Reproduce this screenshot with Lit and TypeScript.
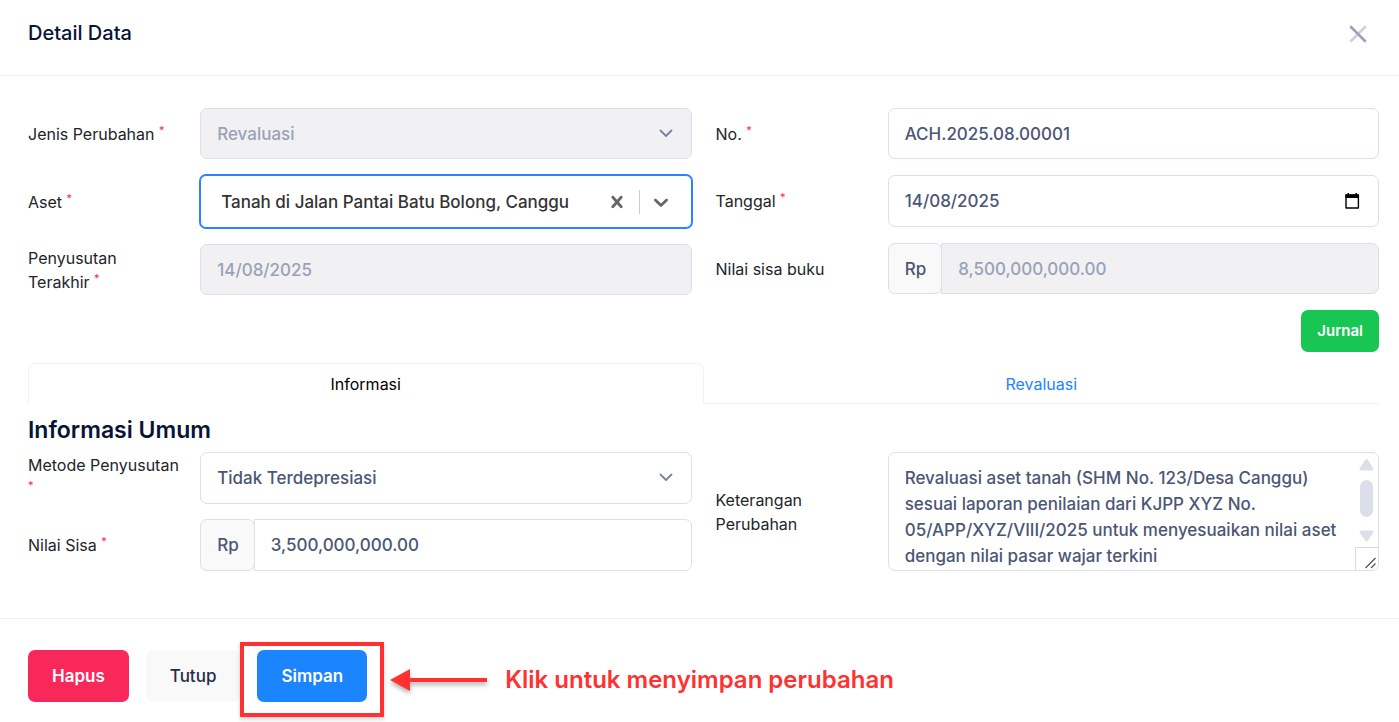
import { LitElement, html, css, nothing } from "lit";
import { customElement, state } from "lit/decorators.js";

const chevron = html`<svg class="chevron" viewBox="0 0 16 16" width="16" height="16" aria-hidden="true">
  <path d="M2.500 5.500L8 11l5.500-5.500" fill="none" stroke="#78829d" stroke-width="1.800" stroke-linecap="round" stroke-linejoin="round" />
</svg>`;

const base = css`
  *, *::before, *::after { box-sizing: border-box; }
  button, input, select, textarea { font: inherit; margin: 0; }
  button { cursor: pointer; }
`;

@customElement("app-root")
export class AppRoot extends LitElement {
  @state() private tab = "informasi";

  static styles = [base, css`
    :host {
      display: block;
      min-height: 100vh;
      background: #fff;
      color: #212529;
      font-family: Inter, "Liberation Sans", sans-serif;
      font-size: 16px;
      line-height: 24px;
      overflow: hidden;
    }
    .header {
      display: flex;
      align-items: center;
      justify-content: space-between;
      height: 76px;
      padding: 0 28px 8px;
      border-bottom: 1px solid #eff2f5;
    }
    .title { margin: 0 0 2px; font-size: 20px; line-height: 24px; font-weight: 500; color: #071437; }
    .close { display: flex; padding: 0; border: 0; background: none; width: 26px; height: 26px; align-items: center; justify-content: center; }
    .body { padding: 32px 20px 47px 28px; }
    .columns { display: grid; grid-template-columns: repeat(2, minmax(0, 1fr)); column-gap: 24px; align-items: start; }
    .stack { display: grid; row-gap: 16px; }
    .stack.dense { row-gap: 15px; }
    .row { display: grid; grid-template-columns: minmax(0, 4fr) minmax(0, 13fr); column-gap: 21px; align-items: center; }
    .row.top { align-items: start; }
    .row.top label { padding-top: 1px; }
    .required { color: #f8285a; font-size: 11px; line-height: 0; vertical-align: super; }

    .control {
      display: block;
      width: 100%;
      height: 51px;
      padding: 0 16px;
      border: 1px solid #dbdfe9;
      border-radius: 7px;
      background: #fff;
      color: #4b5675;
      font-size: 17px;
      line-height: 26px;
      font-weight: 500;
      outline: 0;
      appearance: none;
      opacity: 1;
    }
    .control:disabled { background: #f1f1f4; color: #99a1b7; }
    .tall { height: 52px; }
    .field { position: relative; }
    .chevron { position: absolute; right: 18px; top: 50%; margin-top: -9px; pointer-events: none; }
    .calendar { position: absolute; right: 17px; top: 0; bottom: 0; display: flex; align-items: center; padding: 0; border: 0; background: none; }

    .combo {
      display: flex;
      align-items: center;
      height: 53px;
      padding: 0 13px 0 20px;
      border: 1px solid #2684ff;
      border-radius: 6px;
      box-shadow: 0 0 0 1px #2684ff;
      background: #fff;
    }
    .combo-input { flex: 1; min-width: 0; padding: 0; border: 0; outline: 0; background: none; color: #333; font-size: 17px; line-height: 26px; font-weight: 500; }
    .combo-button { display: flex; padding: 5px; border: 0; background: none; color: #666; }
    .divider { width: 1px; height: 24px; margin: 0 4px 0 5px; background: #ccc; }

    .group { display: flex; }
    .prefix {
      display: flex;
      align-items: center;
      padding: 0 15px 0 16px;
      border: 1px solid #dbdfe9;
      border-radius: 7px;
      background: #f9f9f9;
      color: #4b5675;
      font-size: 17px;
      line-height: 26px;
      font-weight: 500;
    }
    .group .control { flex: 1; min-width: 0; width: auto; margin-left: -1px; border-radius: 0 7px 7px 0; }

    .actions { display: flex; justify-content: flex-end; margin: 15px 0 11px; }
    .btn { border: 0; border-radius: 7px; font-weight: 600; }
    .jurnal { height: 42px; padding: 0 16px; background: #17c653; color: #fff; font-size: 15px; }

    .tabs { display: grid; grid-template-columns: 1fr 1fr; }
    .tab { height: 41px; border: 1px solid transparent; border-bottom-color: #eff2f5; background: none; color: #1b84ff; padding: 0; }
    .tab.active { border-color: #eff2f5; border-bottom-color: #fff; border-radius: 7px 7px 0 0; color: #000; }
    .section { margin: 12px 0 8px; font-size: 23px; line-height: 28px; font-weight: 600; color: #071437; }

    .area { height: 119px; padding: 12px 36px 0 16px; overflow: hidden; resize: none; }
    .scroll { position: absolute; right: 0; top: 0; pointer-events: none; }

    .footer { display: flex; gap: 17px; padding: 31px 28px 20px; border-top: 1px solid #eff2f5; }
    .footer .btn { height: 52px; padding: 0 24px; font-size: 17px; }
    .footer .hapus { background: #f8285a; color: #fff; }
    .footer .tutup { background: #f9f9f9; color: #252f4a; font-weight: 500; }
    .footer .simpan { background: #1b84ff; color: #fff; }
    .save { position: relative; display: flex; }
    .frame {
      position: absolute;
      inset: -8px -17px -15px;
      border: 4px solid #ff3131;
      box-shadow: 0 2px 4px rgba(0, 0, 0, 0.2);
      pointer-events: none;
    }
    .hint {
      position: absolute;
      left: 100%;
      top: -8px;
      bottom: -15px;
      display: flex;
      align-items: center;
      gap: 17px;
      padding-left: 21px;
      color: #ff3131;
      font-size: 24px;
      line-height: 28px;
      font-weight: 600;
      white-space: nowrap;
      pointer-events: none;
    }
    .arrow { filter: drop-shadow(0 3px 2px rgba(0, 0, 0, 0.3)); }
  `];

  private label(id: string, text: string, required = false) {
    return html`<label for=${id}>${text}${required ? html` <span class="required">*</span>` : nothing}</label>`;
  }

  render() {
    return html`
      <header class="header">
        <h1 class="title">Detail Data</h1>
        <button class="close" aria-label="Close">
          <svg viewBox="0 0 18 18" width="18" height="18">
            <path d="M2 16L16 2" stroke="#cdd1de" stroke-width="2.600" stroke-linecap="round" />
            <path d="M2 2l14 14" stroke="#99a1b7" stroke-width="2.600" stroke-linecap="round" />
          </svg>
        </button>
      </header>

      <main class="body">
        <div class="columns">
          <div class="stack">
            <div class="row">
              ${this.label("jenis", "Jenis Perubahan", true)}
              <div class="field">
                <select id="jenis" class="control" disabled><option>Revaluasi</option></select>
                ${chevron}
              </div>
            </div>
            <div class="row">
              ${this.label("aset", "Aset", true)}
              <div class="combo">
                <input id="aset" class="combo-input" role="combobox" aria-expanded="false" .value=${"Tanah di Jalan Pantai Batu Bolong, Canggu"} />
                <button class="combo-button" aria-label="Clear">
                  <svg viewBox="0 0 20 20" width="24" height="24" fill="currentColor">
                    <path d="M14.348 14.849c-0.469 0.469-1.229 0.469-1.697 0l-2.651-3.030-2.651 3.029c-0.469 0.469-1.229 0.469-1.697 0-0.469-0.469-0.469-1.229 0-1.697l2.758-3.15-2.759-3.152c-0.469-0.469-0.469-1.228 0-1.697s1.228-0.469 1.697 0l2.652 3.031 2.651-3.031c0.469-0.469 1.228-0.469 1.697 0s0.469 1.229 0 1.697l-2.758 3.152 2.758 3.15c0.469 0.469 0.469 1.229 0 1.698z" />
                  </svg>
                </button>
                <span class="divider"></span>
                <button class="combo-button" aria-label="Open">
                  <svg viewBox="0 0 20 20" width="24" height="24" fill="currentColor">
                    <path d="M4.516 7.548c0.436-0.446 1.043-0.481 1.576 0l3.908 3.747 3.908-3.747c0.533-0.481 1.141-0.446 1.574 0 0.436 0.445 0.408 1.197 0 1.615-0.406 0.418-4.695 4.502-4.695 4.502-0.217 0.223-0.502 0.335-0.787 0.335s-0.57-0.112-0.789-0.335c0 0-4.287-4.084-4.695-4.502s-0.436-1.17 0-1.615z" />
                  </svg>
                </button>
              </div>
            </div>
            <div class="row">
              ${this.label("terakhir", "Penyusutan Terakhir", true)}
              <input id="terakhir" class="control" disabled .value=${"14/08/2025"} />
            </div>
          </div>

          <div class="stack">
            <div class="row">
              ${this.label("nomor", "No.", true)}
              <input id="nomor" class="control" .value=${"ACH.2025.08.00001"} />
            </div>
            <div class="row">
              ${this.label("tanggal", "Tanggal", true)}
              <div class="field">
                <input id="tanggal" class="control tall" .value=${"14/08/2025"} />
                <button class="calendar" aria-label="Pilih tanggal">
                  <svg viewBox="0 0 20 20" width="20" height="20">
                    <path d="M4 4h12.400v13H4z" fill="none" stroke="#000" stroke-width="1.400" stroke-linejoin="round" />
                    <path d="M3.400 3.500h13.600v3.500H3.400zM5.500 2h1.500v2H5.500zM13.500 2H15v2h-1.500z" fill="#000" />
                  </svg>
                </button>
              </div>
            </div>
            <div class="row">
              ${this.label("buku", "Nilai sisa buku")}
              <div class="group">
                <span class="prefix">Rp</span>
                <input id="buku" class="control" disabled .value=${"8,500,000,000.00"} />
              </div>
            </div>
          </div>
        </div>

        <div class="actions"><button class="btn jurnal">Jurnal</button></div>

        <div class="tabs" role="tablist">
          ${[["informasi", "Informasi"], ["revaluasi", "Revaluasi"]].map(([id, text]) => html`
            <button role="tab" class="tab ${this.tab === id ? "active" : ""}" aria-selected=${this.tab === id}
              @click=${() => (this.tab = id)}>${text}</button>`)}
        </div>

        <h2 class="section">Informasi Umum</h2>

        <div class="columns">
          <div class="stack dense">
            <div class="row top">
              ${this.label("metode", "Metode Penyusutan", true)}
              <div class="field">
                <select id="metode" class="control tall"><option>Tidak Terdepresiasi</option></select>
                ${chevron}
              </div>
            </div>
            <div class="row">
              ${this.label("sisa", "Nilai Sisa", true)}
              <div class="group">
                <span class="prefix">Rp</span>
                <input id="sisa" class="control tall" .value=${"3,500,000,000.00"} />
              </div>
            </div>
          </div>
          <div class="row">
            ${this.label("keterangan", "Keterangan Perubahan")}
            <div class="field">
              <textarea id="keterangan" class="control area" .value=${"Revaluasi aset tanah (SHM No. 123/Desa Canggu) sesuai laporan penilaian dari KJPP XYZ No. 05/APP/XYZ/VIII/2025 untuk menyesuaikan nilai aset dengan nilai pasar wajar terkini"}></textarea>
              <svg class="scroll" viewBox="0 0 24 119" width="24" height="119" aria-hidden="true">
                <path d="M11.500 8.500L17 17H6z M11.500 88L17 80H6z" fill="#dbdfe9" stroke="#dbdfe9" stroke-width="3" stroke-linejoin="round" />
                <rect x="5" y="28" width="13" height="37" rx="6.500" fill="#dbdfe9" />
                <path d="M.5 118V95.500H23" fill="none" stroke="#d9d9d9" />
                <path d="M10.500 116l10-10M16 116l4.500-4.500" stroke="#555" stroke-width="1.300" />
              </svg>
            </div>
          </div>
        </div>
      </main>

      <footer class="footer">
        <button class="btn hapus">Hapus</button>
        <button class="btn tutup">Tutup</button>
        <div class="save">
          <button class="btn simpan">Simpan</button>
          <div class="frame"></div>
          <div class="hint">
            <svg class="arrow" viewBox="0 0 100 26" width="100" height="26" aria-hidden="true">
              <path d="M2 13L22 2v9h77v4H22v9z" fill="#ff3131" />
            </svg>
            <span>Klik untuk menyimpan perubahan</span>
          </div>
        </div>
      </footer>
    `;
  }
}
